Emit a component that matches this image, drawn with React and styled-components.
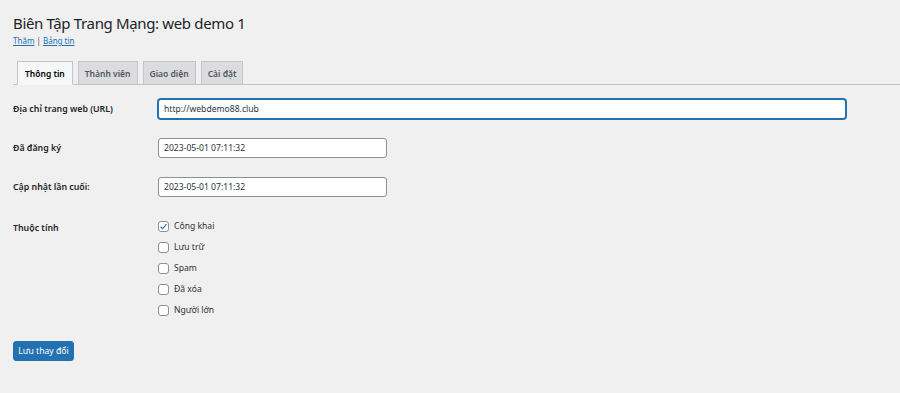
import React from 'react'
import styled, { createGlobalStyle } from 'styled-components';

const GlobalStyle = createGlobalStyle`
    html, body {
        margin: 0;
        padding: 0;
        background: #f0f0f1;
    }
    body {
        font-family: "Noto Sans", "Open Sans", sans-serif;
        color: #1d2327;
    }
`;

const tabs = ['Thông tin', 'Thành viên', 'Giao diện', 'Cài đặt'];
const flags = [
    { label: 'Công khai', checked: true },
    { label: 'Lưu trữ' },
    { label: 'Spam' },
    { label: 'Đã xóa' },
    { label: 'Người lớn' },
];

function App() {
  return (
    <Wrap>
        <GlobalStyle />
        <Title>Biên Tập Trang Mạng: web demo 1</Title>
        <SubLinks>
            <a href='#'>Thăm</a> | <a href='#'>Bảng tin</a>
        </SubLinks>
        <TabBar>
            {tabs.map((t, i) => (
                <Tab key={t} active={i === 0}>{t}</Tab>
            ))}
        </TabBar>
        <FormTable>
            <Label>Địa chỉ trang web (URL)</Label>
            <Field>
                <TextInput wide focused defaultValue='http://webdemo88.club' />
            </Field>
            <Label>Đã đăng ký</Label>
            <Field>
                <TextInput defaultValue='2023-05-01 07:11:32' />
            </Field>
            <Label>Cập nhật lần cuối:</Label>
            <Field>
                <TextInput defaultValue='2023-05-01 07:11:32' />
            </Field>
            <Label top>Thuộc tính</Label>
            <Field top>
                <CheckList>
                    {flags.map(f => (
                        <CheckRow key={f.label}>
                            <Box>
                                {f.checked && (
                                    <svg width='9' height='9' viewBox='0 0 20 20'>
                                        <path d='M3.5 10.5 L8 15 L16.5 4.5' fill='none' stroke='#2271b1' strokeWidth='2.6' />
                                    </svg>
                                )}
                            </Box>
                            {f.label}
                        </CheckRow>
                    ))}
                </CheckList>
            </Field>
        </FormTable>
        <SaveButton>Lưu thay đổi</SaveButton>
    </Wrap>
  )
}

const Wrap = styled.div`
    padding: 11px 0 0 13px;
    min-height: 393px;
    box-sizing: border-box;
`;

const Title = styled.h1`
    margin: 0;
    font-size: 15px;
    letter-spacing: -0.35px;
    font-weight: 400;
    line-height: 24px;
    color: #1d2327;
`;

const SubLinks = styled.div`
    font-size: 8px;
    line-height: 12px;
    color: #50575e;
    a {
        color: #2271b1;
        text-decoration: underline;
    }
`;

const TabBar = styled.div`
    display: flex;
    align-items: flex-end;
    gap: 5px;
    margin-top: 14px;
    padding-left: 4px;
    border-bottom: 1px solid #c3c4c7;
    height: 23px;
`;

const Tab = styled.div`
    box-sizing: border-box;
    height: ${p => (p.active ? '24px' : '23px')};
    margin-bottom: ${p => (p.active ? '-1px' : '0')};
    padding: 0 ${p => (p.active ? '7px' : '6px')};
    display: flex;
    align-items: center;
    font-size: 8.5px;
    font-weight: 600;
    color: ${p => (p.active ? '#000' : '#50575e')};
    background: ${p => (p.active ? '#f6f7f7' : '#dcdcde')};
    border: 1px solid #c3c4c7;
    border-bottom: ${p => (p.active ? '1px solid #f6f7f7' : '0')};
`;

const FormTable = styled.div`
    display: grid;
    grid-template-columns: 145px 1fr;
    row-gap: 19px;
    padding-top: 14px;
`;

const Label = styled.div`
    font-size: 8.8px;
    font-weight: 600;
    color: #1d2327;
    display: flex;
    align-items: ${p => (p.top ? 'flex-start' : 'center')};
    padding-top: ${p => (p.top ? '6px' : '0')};
`;

const Field = styled.div`
    display: flex;
    align-items: center;
    padding-top: ${p => (p.top ? '4px' : '0')};
`;

const TextInput = styled.input`
    box-sizing: border-box;
    width: ${p => (p.wide ? '688px' : '229px')};
    height: 20px;
    padding: 0 5px;
    font-family: "Noto Sans", "Open Sans", sans-serif;
    font-size: 8.6px;
    color: #2c3338;
    background: #fff;
    border: 1px solid ${p => (p.focused ? '#2271b1' : '#8c8f94')};
    border-radius: 3px;
    box-shadow: ${p => (p.focused ? '0 0 0 1px #2271b1' : 'none')};
    outline: none;
`;

const CheckList = styled.div`
    display: flex;
    flex-direction: column;
    gap: 9px;
`;

const CheckRow = styled.label`
    display: flex;
    align-items: center;
    gap: 5px;
    height: 12px;
    font-size: 8.6px;
    color: #2c3338;
`;

const Box = styled.span`
    box-sizing: border-box;
    width: 11px;
    height: 11px;
    border: 1px solid #8c8f94;
    border-radius: 3px;
    background: #fff;
    display: flex;
    align-items: center;
    justify-content: center;
`;

const SaveButton = styled.button`
    margin-top: 25px;
    height: 20px;
    width: 61px;
    padding: 0;
    font-family: "Noto Sans", "Open Sans", sans-serif;
    font-size: 8.6px;
    color: #fff;
    background: #2271b1;
    border: 1px solid #2271b1;
    border-radius: 3px;
`;

export default App
